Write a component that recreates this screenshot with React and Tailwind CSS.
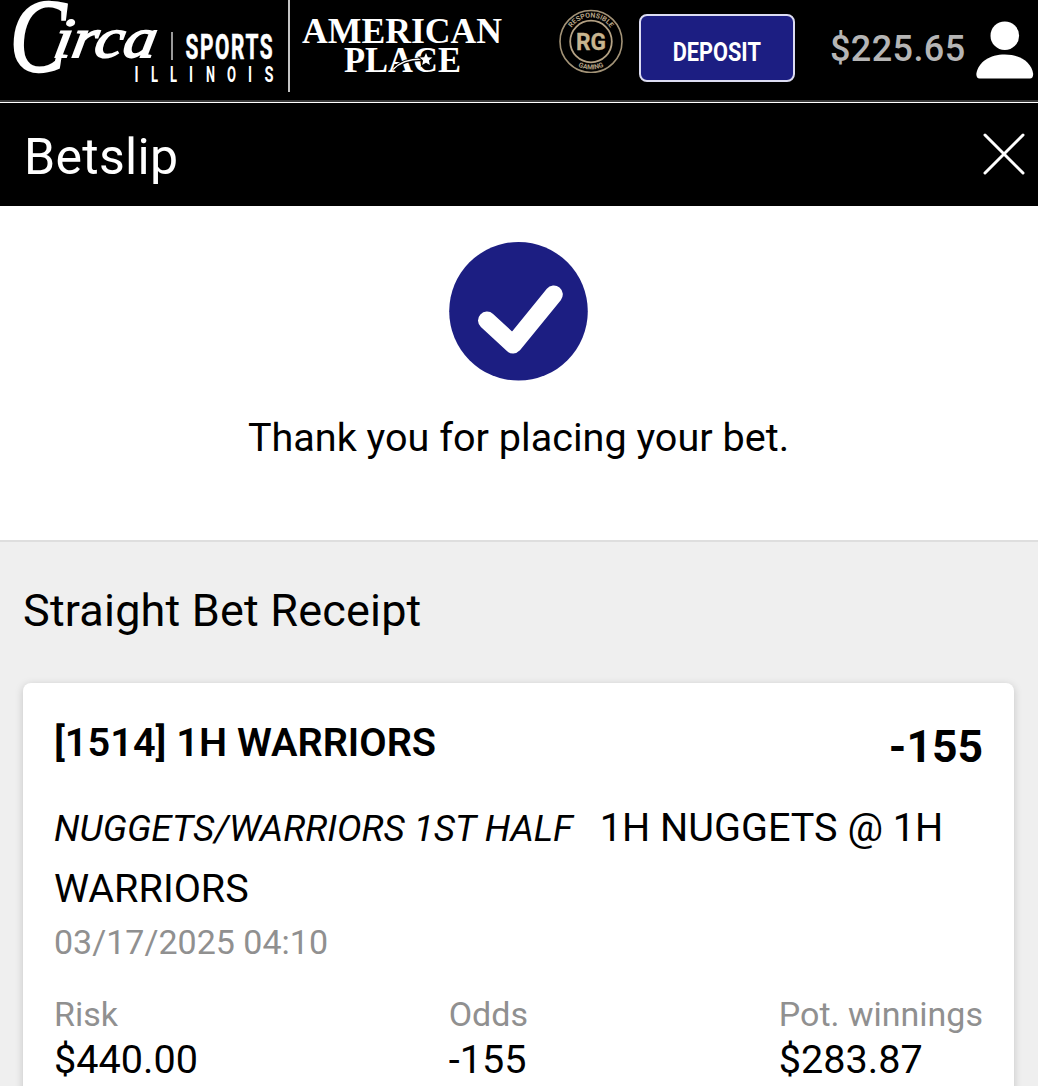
import React from 'react';

const bet = {
    title: '[1514] 1H WARRIORS',
    odds: '-155',
    league: 'NUGGETS/WARRIORS 1ST HALF',
    match: '1H NUGGETS @ 1H WARRIORS',
    date: '03/17/2025 04:10'
};

const CircaLogo = () => (
    <svg width="290" height="100" viewBox="0 0 290 100" className="block shrink-0" fill="#fff" role="img" aria-label="Circa Sports Illinois">
        <g fontFamily="Liberation Serif, serif" fontStyle="italic" stroke="#fff">
            <text x="10" y="71" fontSize="103" strokeWidth="2.5" textLength="56" lengthAdjust="spacingAndGlyphs">C</text>
            <text x="0" y="0" fontSize="56" strokeWidth="1.8" textLength="102" lengthAdjust="spacingAndGlyphs" transform="translate(52 57) skewX(-10)">irca</text>
        </g>
        <rect x="171" y="32" width="2" height="28" fill="#9a9a9a" />
        <g fontFamily="Roboto, sans-serif" fontWeight="700">
            <text fontSize="36" letterSpacing="2.8" stroke="#fff" strokeWidth="0.6" transform="translate(185.500 58.500) scale(.58 1)">SPORTS</text>
            {[['I', 134.5, 4], ['L', 151, 7], ['L', 170, 7], ['I', 189, 4], ['N', 206, 9], ['O', 227, 9], ['I', 248, 4], ['S', 264.5, 9]].map(([letter, x, w]) => (
                <text key={x} x={x} y="82" fontSize="22.5" textLength={w} lengthAdjust="spacingAndGlyphs">{letter}</text>
            ))}
        </g>
        <rect x="288" y="0" width="2.5" height="92" fill="#c4c4c4" />
    </svg>
);

const AmericanPlaceLogo = () => (
    <svg width="230" height="100" viewBox="290 0 230 100" className="block shrink-0" fill="#fff" role="img" aria-label="American Place">
        <g fontFamily="Liberation Serif, serif" fontWeight="700">
            <text x="302" y="43" fontSize="36" textLength="200" lengthAdjust="spacingAndGlyphs">AMERICAN</text>
            <text x="344" y="71.5" fontSize="36" textLength="117" lengthAdjust="spacingAndGlyphs">PLACE</text>
        </g>
        <path d="M395 67.500C402 61.500 411 59 421 59.500" fill="none" stroke="#000" strokeWidth="3.5" />
        <path d="M393 69.500C400 62 410 59 421 59" fill="none" stroke="#fff" strokeWidth="1.3" />
        <path d="M426 53l1.800 4.200 4.600.4-3.500 3 1 4.500-3.900-2.400-3.900 2.400 1-4.500-3.500-3 4.600-.4z" stroke="#000" strokeWidth="2" paintOrder="stroke" />
    </svg>
);

const ResponsibleGamingBadge = () => (
    <svg width="64" height="64" viewBox="0 0 64 64" className="mt-[9px] ml-[39px] block shrink-0" fill="#b5a284" fontFamily="Roboto, sans-serif" fontWeight="700" role="img" aria-label="Responsible Gaming">
        <defs>
            <path id="rg-top" d="M8.500 32a23.500 23.500 0 0 1 47 0" />
            <path id="rg-bottom" d="M3.500 32a28.500 28.500 0 0 0 57 0" />
        </defs>
        <circle cx="32" cy="32.5" r="31" fill="none" stroke="#a39377" strokeWidth="1.6" />
        <circle cx="32" cy="32.5" r="20.8" fill="none" stroke="#b5a284" strokeWidth="1.8" />
        <text x="17" y="40.5" fontSize="24" textLength="30" lengthAdjust="spacingAndGlyphs" fill="#c8b58f" stroke="#c8b58f" strokeWidth="0.3">RG</text>
        <text fontSize="7"><textPath href="#rg-top" startOffset="50%" textAnchor="middle">RESPONSIBLE</textPath></text>
        <text fontSize="6.8"><textPath href="#rg-bottom" startOffset="50%" textAnchor="middle">GAMING</textPath></text>
    </svg>
);

const Header = () => (
    <header className="h-[103px] shrink-0 border-b border-white bg-black">
        <div className="flex h-[102px] items-start border-b-2 border-[#383838]">
            <CircaLogo />
            <AmericanPlaceLogo />
            <ResponsibleGamingBadge />
            <button type="button" className="mt-[14px] ml-4 flex h-[68px] w-[156px] shrink-0 items-center justify-center rounded-lg border-2 border-[#dcdcf2] bg-[#1c1e82] pt-2">
                <span className="scale-x-[0.835] text-[26px] font-bold text-white">DEPOSIT</span>
            </button>
            <span className="mt-[25px] ml-[35px] w-[145px] shrink-0 text-[36px] leading-[48px] font-medium tracking-[0.4px] text-[#b5b5b5]">$225.65</span>
            <svg width="58" height="58" viewBox="0 0 58 58" className="mt-[21px] ml-px block shrink-0" fill="#fff" aria-label="Account">
                <circle cx="28.8" cy="14.7" r="14.3" />
                <path d="M3.500 57.500Q.5 57.500.3 53C2 41 14 33.500 28.800 33.500S55.500 41 57.200 53Q57 57.500 54 57.500z" />
            </svg>
        </div>
    </header>
);

const Stat = ({ label, value }) => (
    <div>
        <div className="text-[34px] leading-[44px] text-[#909090]">{label}</div>
        <div className="text-[39.6px] leading-[47px]">{value}</div>
    </div>
);

const BetReceipt = () => (
    <section className="grow border-t-2 border-[#dedede] bg-[#efefef] pr-6 pl-[23px]">
        <h2 className="pt-[39px] text-[45px] leading-[60px] tracking-[0.18px]">Straight Bet Receipt</h2>
        <article className="mt-[42px] h-[440px] rounded-lg bg-white px-[31px] pt-[34px] shadow-[0_2px_8px_rgba(0,0,0,0.18)]">
            <div className="flex justify-between">
                <h3 className="text-[39.7px] leading-[52px] font-semibold">{bet.title}</h3>
                <span className="mt-1 text-[44.5px] leading-[52px] font-bold">{bet.odds}</span>
            </div>
            <p className="mt-[25px] text-[39.6px] leading-[60px]">
                <em className="mr-[27px] text-[36.85px]">{bet.league}</em>
                {bet.match}
            </p>
            <div className="-mt-px text-[34px] leading-[48px] text-[#909090]">{bet.date}</div>
            <div className="mt-[26px] flex justify-between">
                <Stat label="Risk" value="$440.00" />
                <Stat label="Odds" value="-155" />
                <Stat label="Pot. winnings" value="$283.87" />
            </div>
        </article>
    </section>
);

const App = () => (
    <div className="flex h-[1086px] w-[1038px] flex-col overflow-hidden bg-white font-['Roboto',sans-serif] text-black">
        <Header />
        <div className="flex h-[103px] shrink-0 items-center justify-between bg-black pr-[13px] pl-6 text-white">
            <h1 className="pt-1 text-[50px] leading-[60px] tracking-[0.3px]">Betslip</h1>
            <button type="button" aria-label="Close" className="pb-0.5">
                <svg width="42" height="42" viewBox="0 0 42 42" className="block" stroke="#fff" strokeWidth="3" strokeLinecap="round">
                    <path d="M2 2l38 38M40 2L2 40" />
                </svg>
            </button>
        </div>
        <div className="flex h-[334px] shrink-0 flex-col items-center pt-[35px] pr-px">
            <svg width="139" height="140" viewBox="0 0 139 140" className="block">
                <circle cx="69.5" cy="70.3" r="69.3" fill="#1c1e82" />
                <path d="M38 79.500L64 103.500L104.800 53.500" fill="none" stroke="#fff" strokeWidth="18" strokeLinecap="round" strokeLinejoin="round" />
            </svg>
            <p className="mt-[31px] text-[39.6px] leading-[52px]">Thank you for placing your bet.</p>
        </div>
        <BetReceipt />
    </div>
);

export default App;
